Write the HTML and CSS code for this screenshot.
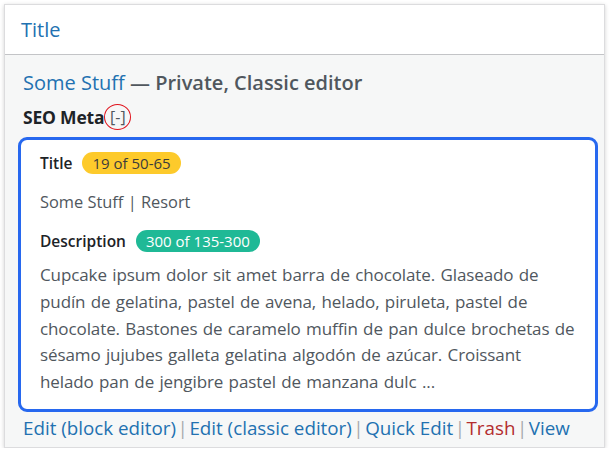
FILE: index.html
```html
<!DOCTYPE html>
<html>
<head>
<meta charset="utf-8">
<link rel="stylesheet" href="styles.css">
</head>
<body>
<div class="card">
  <div class="card-head"><a class="head-link">Title</a></div>
  <div class="card-body">
    <div class="row-title"><a class="post-link">Some Stuff</a> <span class="post-state">— Private, Classic editor</span></div>
    <div class="seo-line"><span class="seo-label">SEO Meta</span><span class="toggle">[-]</span></div>
    <div class="seo-box">
      <div class="field-row"><span class="field-label">Title</span><span class="badge badge-warn">19 of 50-65</span></div>
      <div class="field-value">Some Stuff | Resort</div>
      <div class="field-row"><span class="field-label">Description</span><span class="badge badge-ok">300 of 135-300</span></div>
      <p class="desc">Cupcake ipsum dolor sit amet barra de chocolate. Glaseado de pudín de gelatina, pastel de avena, helado, piruleta, pastel de chocolate. Bastones de caramelo muffin de pan dulce brochetas de sésamo jujubes galleta gelatina algodón de azúcar. Croissant<br>helado pan de jengibre pastel de manzana dulc ...</p>
    </div>
    <div class="actions"><a>Edit (block editor)</a><span class="sep">|</span><a>Edit (classic editor)</a><span class="sep">|</span><a>Quick Edit</a><span class="sep">|</span><a class="trash">Trash</a><span class="sep">|</span><a>View</a></div>
  </div>
</div>
</body>
</html>
```
FILE: styles.css
```css
* { box-sizing: border-box; }
body {
  margin: 0;
  background: #ffffff;
  font-family: "Open Sans", "Noto Sans", sans-serif;
  color: #50575e;
}
.card {
  margin: 4px 0 0 4px;
  width: 601px;
  border: 1px solid #dcdcde;
  box-shadow: 0 1px 4px rgba(0,0,0,0.18);
  background: #ffffff;
}
.card-head {
  height: 50px;
  display: flex;
  align-items: center;
  padding-left: 16px;
  border-bottom: 1px solid #c3c4c7;
}
.head-link {
  font-size: 20px;
  color: #2271b1;
}
.card-body {
  background: #f6f7f7;
  padding: 14px 6px 7px 13px;
}
.row-title {
  line-height: 28px;
  font-size: 20px;
  padding-left: 5px;
}
.post-link { color: #2271b1; }
.post-state { color: #50575e; font-weight: 600; }
.seo-line {
  margin-top: 7px;
  height: 26px;
  font-size: 17.5px;
  padding-left: 5px;
  display: flex;
  align-items: center;
}
.seo-label { font-weight: 700; color: #1d2327; letter-spacing: -0.2px; }
.toggle {
  display: inline-flex;
  align-items: center;
  justify-content: center;
  width: 27px;
  height: 26px;
  border: 1.5px solid #e0141e;
  border-radius: 50%;
  color: #50575e;
  font-size: 16px;
}
.seo-box {
  margin-top: 7px;
  background: #ffffff;
  border: 3px solid #2768ef;
  border-radius: 9px;
  padding: 12px 15px 13px 19px;
}
.field-row {
  display: flex;
  align-items: center;
  gap: 10px;
  height: 22px;
}
.field-label {
  font-weight: 600;
  font-size: 15.5px;
  color: #1d2327;
}
.badge {
  display: inline-flex;
  align-items: center;
  height: 22px;
  padding: 0 10px;
  border-radius: 11px;
  font-size: 15px;
}
.badge-warn { background: #fdca2b; color: #3c3c3c; }
.badge-ok { background: #1fb996; color: #ffffff; }
.field-value {
  margin: 15px 0;
  line-height: 26px;
  font-size: 16.4px;
}
.desc {
  margin: 10px 0 0;
  font-size: 17px;
  line-height: 26.75px;
  letter-spacing: -0.1px;
  word-spacing: 1px;
}
.actions {
  margin-top: 4.5px;
  line-height: 24px;
  font-size: 18.8px;
  padding-left: 5px;
}
.actions a { color: #2271b1; }
.actions a.trash { color: #b32d2e; }
.sep { color: #a7aaad; margin: 0 1.5px; }
```
